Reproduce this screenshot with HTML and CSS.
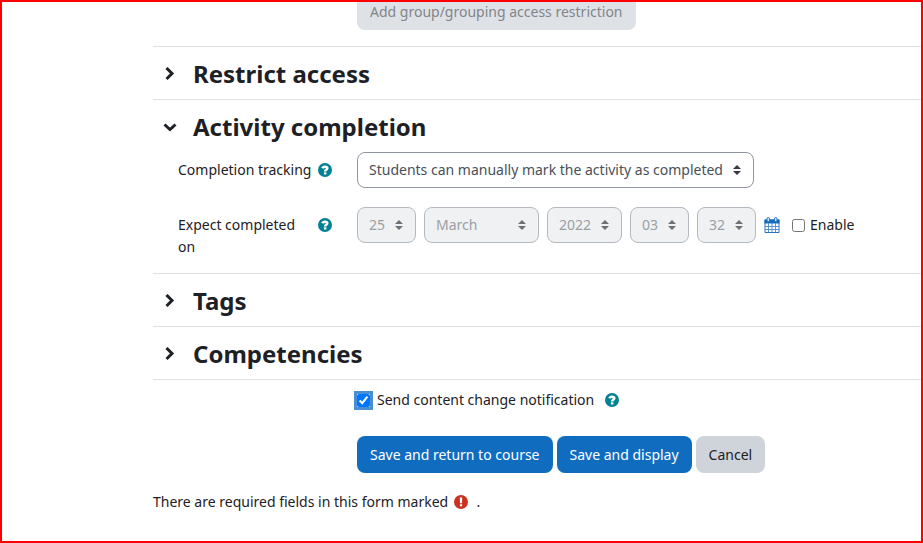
FILE: index.html
```html
<!DOCTYPE html>
<html lang="en">
<head>
<meta charset="utf-8">
<title>Activity settings</title>
<meta name="viewport" content="width=device-width, initial-scale=1">
<link rel="stylesheet" href="styles.css">
</head>
<body>
<svg class="symbols" aria-hidden="true">
  <symbol id="help" viewBox="0 0 14 14"><circle cx="7" cy="7" r="7" fill="#008196"/><path d="M4.300 5.200C4.800 4.200 5.700 3.700 7 3.700c1.500 0 2.300.7 2.300 1.600 0 1.400-2.200 1.500-2.200 3.200" fill="none" stroke="#fff" stroke-width="2.500"/><rect x="5.900" y="9.300" width="2.500" height="2.200" fill="#fff"/></symbol>
  <symbol id="right" viewBox="0 0 14 14"><path d="M3.500 1 9 6.500 3.500 12" fill="none" stroke="currentColor" stroke-width="3"/></symbol>
  <symbol id="down" viewBox="0 0 14 14"><path d="M1.500 4.500 7 9.500 12.500 4.500" fill="none" stroke="currentColor" stroke-width="3"/></symbol>
  <symbol id="sort" viewBox="0 0 8 10"><path d="M0 4 4 0l4 4zM0 6l4 4 4-4z" fill="currentColor"/></symbol>
</svg>
<main class="frame">
  <form class="form">
    <div class="field first">
      <button class="btn muted" type="button" disabled>Add group/grouping access restriction</button>
    </div>

    <section class="section">
      <h3 class="heading"><a class="toggle" href="#" aria-label="Expand Restrict access"><svg><use href="#right"/></svg></a>Restrict access</h3>
    </section>

    <section class="section open">
      <h3 class="heading"><a class="toggle" href="#" aria-label="Collapse Activity completion"><svg><use href="#down"/></svg></a>Activity completion</h3>
      <div class="rows">
        <div class="field">
          <div class="label"><label for="tracking">Completion tracking</label><a class="help" href="#" aria-label="Help with Completion tracking"><svg><use href="#help"/></svg></a></div>
          <div class="controls">
            <span class="pick wide"><select id="tracking"><option>Students can manually mark the activity as completed</option></select><svg><use href="#sort"/></svg></span>
          </div>
        </div>
        <div class="field">
          <div class="label"><label for="day">Expect completed on</label><a class="help" href="#" aria-label="Help with Expect completed on"><svg><use href="#help"/></svg></a></div>
          <div class="controls">
            <span class="pick short"><select id="day" disabled><option>25</option></select><svg><use href="#sort"/></svg></span>
            <span class="pick month"><select aria-label="Month" disabled><option>March</option></select><svg><use href="#sort"/></svg></span>
            <span class="pick year"><select aria-label="Year" disabled><option>2022</option></select><svg><use href="#sort"/></svg></span>
            <span class="pick short"><select aria-label="Hour" disabled><option>03</option></select><svg><use href="#sort"/></svg></span>
            <span class="pick short"><select aria-label="Minute" disabled><option>32</option></select><svg><use href="#sort"/></svg></span>
            <a class="calendar" href="#" aria-label="Calendar"><svg viewBox="0 0 16 16"><path d="M1 3h14v12.500H1z" fill="#fff" stroke="#2a6fc0"/><path d="M.5 2.500h15v4H.5z" fill="#0f6cbf"/><path d="M4.500 6v9M8 6v9M11.500 6v9M1 9.500h14M1 12.500h14" stroke="#5a92cf"/><rect x="3" y=".5" width="2.500" height="4" rx="1.200" fill="#dbe9f7" stroke="#2a6fc0"/><rect x="10.500" y=".5" width="2.500" height="4" rx="1.200" fill="#dbe9f7" stroke="#2a6fc0"/></svg></a>
            <label class="check"><input type="checkbox">Enable</label>
          </div>
        </div>
      </div>
    </section>

    <section class="section">
      <h3 class="heading"><a class="toggle" href="#" aria-label="Expand Tags"><svg><use href="#right"/></svg></a>Tags</h3>
    </section>
    <section class="section">
      <h3 class="heading"><a class="toggle" href="#" aria-label="Expand Competencies"><svg><use href="#right"/></svg></a>Competencies</h3>
    </section>

    <section class="section actions">
      <div class="notify">
        <label class="check"><input class="focused" type="checkbox" checked>Send content change notification</label>
        <a class="help" href="#" aria-label="Help with Send content change notification"><svg><use href="#help"/></svg></a>
      </div>
      <div class="buttons">
        <button class="btn primary" type="button">Save and return to course</button>
        <button class="btn primary" type="button">Save and display</button>
        <button class="btn secondary" type="button">Cancel</button>
      </div>
    </section>
    <p class="required">There are required fields in this form marked <svg class="alert" viewBox="0 0 14 14" role="img" aria-label="Required field"><circle cx="7" cy="7" r="7" fill="#ca3120"/><path d="M5.800 2.500h2.400L8 8.200H6z" fill="#fff"/><rect x="5.900" y="9.300" width="2.200" height="2" fill="#fff"/></svg> .</p>
  </form>
</main>
</body>
</html>
```
FILE: styles.css
```css
* { box-sizing: border-box; }

body {
  margin: 0;
  background: #fff;
  color: #1d2125;
  font: 14px/22px "Noto Sans", "Open Sans", sans-serif;
}

button, select, input { font: inherit; }

.symbols { position: absolute; width: 0; height: 0; }

.frame {
  min-height: 100vh;
  overflow: hidden;
  border: 2px solid #f00;
  padding-left: 151px;
}

.field {
  display: grid;
  grid-template-columns: 179px 1fr;
  padding-left: 25px;
}

.first { margin-top: -9px; padding-bottom: 16px; }
.first .btn { grid-column: 2; justify-self: start; }

.btn {
  height: 37px;
  padding: 0 12px;
  border: 1px solid transparent;
  border-radius: 8px;
  white-space: nowrap;
}
.muted { background: #dee2e6; color: #828589; }
.primary { background: #0f6cbf; color: #fff; }
.secondary { background: #ced4da; color: #1d2125; }

.section { border-top: 1px solid #dee2e6; }
.open { padding-bottom: 15px; }

.heading {
  display: flex;
  align-items: center;
  height: 52px;
  margin: 0;
  padding-top: 2px;
  font-size: 24px;
  line-height: 32px;
  font-weight: 700;
}
.toggle { display: flex; width: 40px; padding-left: 10px; color: #1d2125; }
.toggle svg { width: 14px; height: 14px; }

.rows { display: grid; gap: 19px; }

.label {
  display: flex;
  justify-content: space-between;
  align-items: flex-start;
  padding: 7px 25px 0 0;
}
.label label { max-width: 136px; }
.help { display: flex; flex: none; padding-top: 4px; }
.help svg { width: 14px; height: 14px; }

.controls { display: flex; align-items: flex-start; gap: 8px; }

.pick { display: grid; align-items: center; color: #343a40; }
.pick select, .pick svg { grid-area: 1 / 1; }
.pick select {
  width: 100%;
  height: 36px;
  padding: 0 28px 0 11px;
  border: 1px solid #8f959e;
  border-radius: 8px;
  background: #fff;
  color: #495057;
  appearance: none;
}
.pick select:disabled {
  border-color: #b4b9bf;
  background: #f0f1f3;
  color: #9b9fa4;
  opacity: 1;
}
.pick:has(:disabled) { color: #6c7075; }
.pick svg {
  justify-self: end;
  width: 8px;
  height: 10px;
  margin-right: 13px;
  pointer-events: none;
}
.wide { width: 397px; }
.short { width: 59px; }
.month { width: 115px; }
.year { width: 75px; }

.calendar { display: flex; padding-top: 10px; }
.calendar svg { width: 16px; height: 16px; }

.check { display: flex; align-items: center; gap: 5px; }
.check input { width: 13px; height: 13px; margin: 0; }
.controls .check { padding: 7px 0 0 4px; }

.actions { padding: 9px 0 0 204px; }
.notify { display: flex; gap: 11px; }
.notify .check { gap: 7px; }
.focused { outline: 3px solid #4a90d0; }
.buttons { display: flex; gap: 4px; margin-top: 25px; }

.required { margin: 18px 0; }
.alert { width: 14px; height: 14px; margin: 0 5px 0 2px; vertical-align: -2px; }
```
